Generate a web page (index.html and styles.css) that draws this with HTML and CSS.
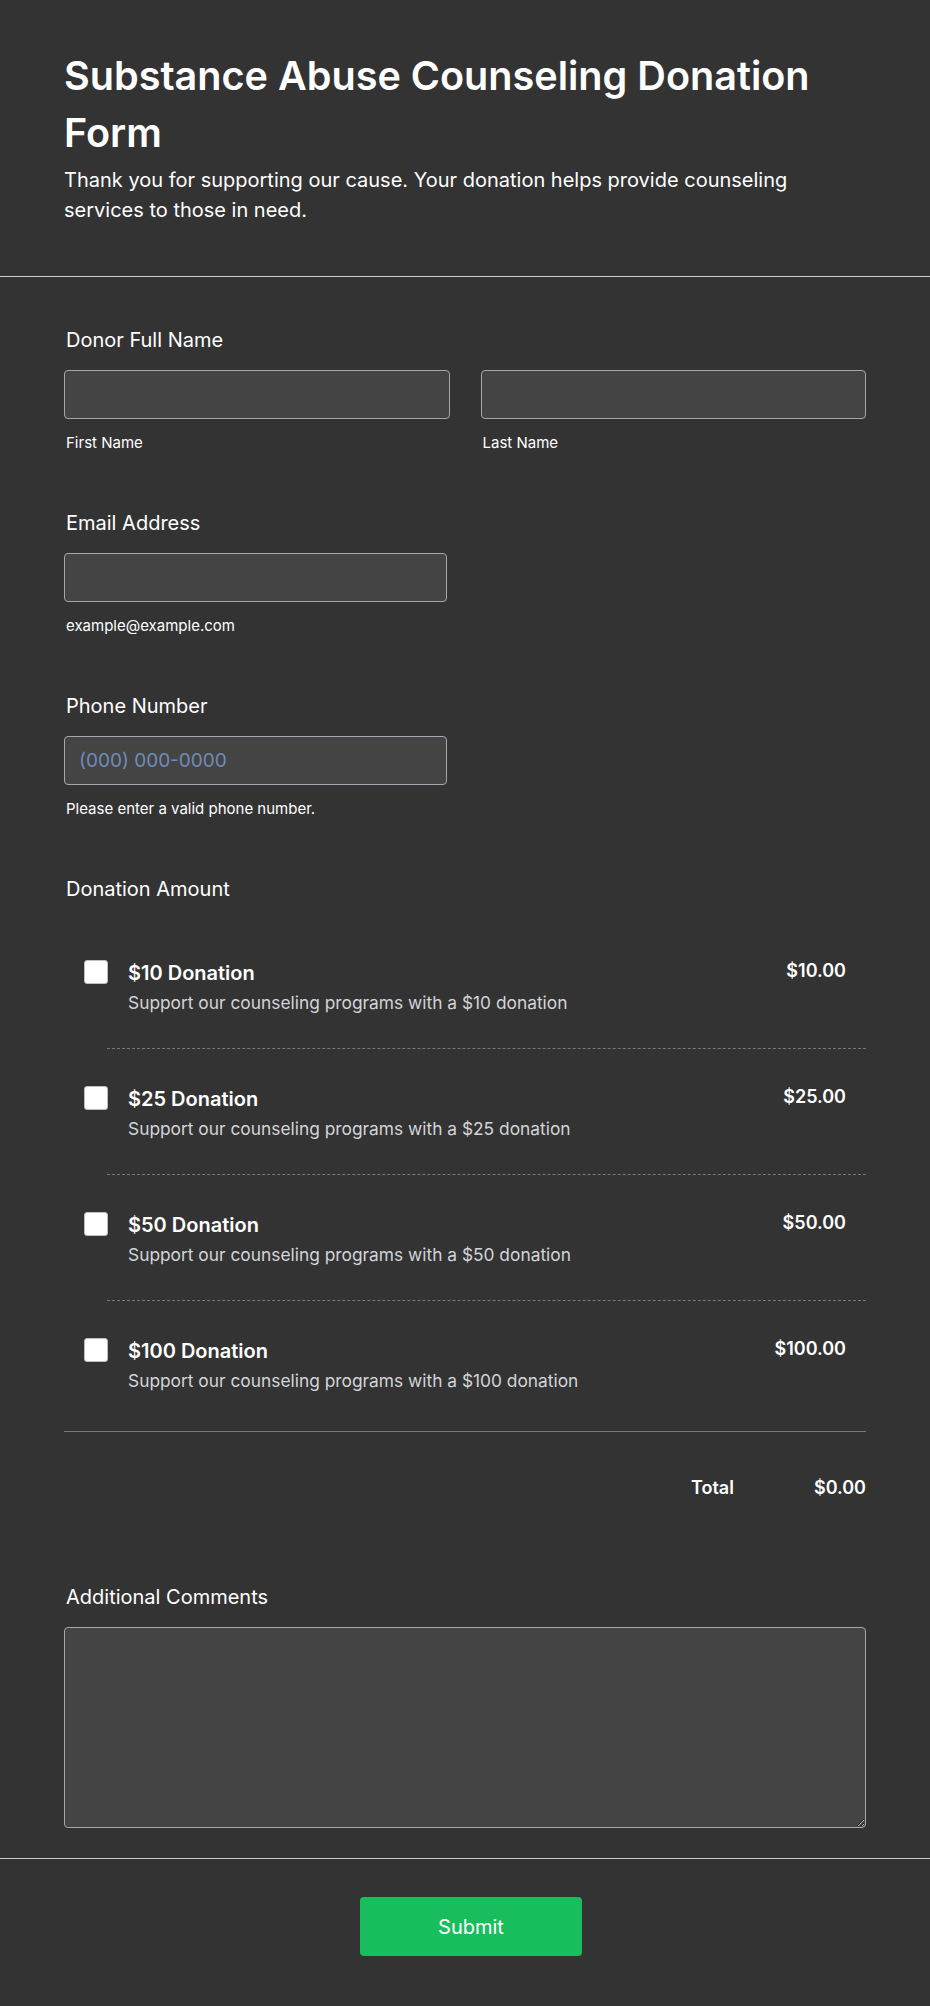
FILE: index.html
```html
<!DOCTYPE html>
<html lang="en">
<head>
<meta charset="utf-8">
<title>Substance Abuse Counseling Donation Form</title>
<link rel="stylesheet" href="styles.css">
</head>
<body>
<header class="header">
  <h1 class="title">Substance Abuse Counseling Donation Form</h1>
  <p class="subtitle">Thank you for supporting our cause. Your donation helps provide counseling services to those in need.</p>
</header>
<form class="form">
  <div class="field">
    <label class="label">Donor Full Name</label>
    <div class="name-grid">
      <div class="col">
        <input class="input" type="text">
        <span class="hint">First Name</span>
      </div>
      <div class="col">
        <input class="input" type="text">
        <span class="hint">Last Name</span>
      </div>
    </div>
  </div>
  <div class="field">
    <label class="label">Email Address</label>
    <input class="input input-half" type="email">
    <span class="hint">example@example.com</span>
  </div>
  <div class="field">
    <label class="label">Phone Number</label>
    <input class="input input-half" type="tel" placeholder="(000) 000-0000">
    <span class="hint">Please enter a valid phone number.</span>
  </div>
  <div class="field field-donation">
    <label class="label">Donation Amount</label>
    <div class="items">
      <div class="item">
        <input class="check" type="checkbox">
        <div class="item-text">
          <div class="item-title">$10 Donation</div>
          <div class="item-desc">Support our counseling programs with a $10 donation</div>
        </div>
        <div class="item-price">$10.00</div>
      </div>
      <div class="sep"></div>
      <div class="item">
        <input class="check" type="checkbox">
        <div class="item-text">
          <div class="item-title">$25 Donation</div>
          <div class="item-desc">Support our counseling programs with a $25 donation</div>
        </div>
        <div class="item-price">$25.00</div>
      </div>
      <div class="sep"></div>
      <div class="item">
        <input class="check" type="checkbox">
        <div class="item-text">
          <div class="item-title">$50 Donation</div>
          <div class="item-desc">Support our counseling programs with a $50 donation</div>
        </div>
        <div class="item-price">$50.00</div>
      </div>
      <div class="sep"></div>
      <div class="item item-last">
        <input class="check" type="checkbox">
        <div class="item-text">
          <div class="item-title">$100 Donation</div>
          <div class="item-desc">Support our counseling programs with a $100 donation</div>
        </div>
        <div class="item-price">$100.00</div>
      </div>
    </div>
    <div class="total">
      <span class="total-label">Total</span>
      <span class="total-value">$0.00</span>
    </div>
  </div>
  <div class="field field-comments">
    <label class="label">Additional Comments</label>
    <textarea class="textarea"></textarea>
  </div>
</form>
<footer class="footer">
  <button class="submit" type="button">Submit</button>
</footer>
</body>
</html>
```

FILE: styles.css
```css
* { box-sizing: border-box; }
html, body { margin: 0; padding: 0; }
body {
  background: #333333;
  color: #ffffff;
  font-family: Inter, "Noto Sans", sans-serif;
}
.header {
  padding: 48px 64px 51px;
  border-bottom: 1px solid #cfcfcf;
}
.title {
  margin: 0;
  font-size: 39.6px;
  line-height: 57px;
  font-weight: 600;
}
.subtitle {
  margin: 3px 0 0;
  font-size: 20px;
  line-height: 30px;
  font-weight: 400;
}
.form {
  padding: 50px 64px 0;
}
.field {
  display: flex;
  flex-direction: column;
  margin-bottom: 57px;
}
.label {
  display: block;
  font-size: 20px;
  line-height: 26px;
  font-weight: 400;
  margin: 0 2px 17px;
}
.name-grid {
  display: grid;
  grid-template-columns: 1fr 1fr;
  gap: 31px;
}
.col { display: flex; flex-direction: column; }
.input {
  display: block;
  width: 100%;
  height: 49px;
  background: #444444;
  border: 1px solid #a3a7ae;
  border-radius: 4px;
  padding: 0 14px;
  color: #ffffff;
  font-family: inherit;
  font-size: 19px;
}
.input::placeholder { color: #6f8db8; }
.input-half { width: 383px; }
.hint {
  display: block;
  margin: 13px 2px 0;
  font-size: 15px;
  line-height: 21px;
}
.items {
  margin-top: 4px;
  border-bottom: 1px solid #7a7a7a;
  padding-bottom: 5px;
}
.item {
  display: flex;
  align-items: flex-start;
  padding: 36px 20px 32px;
}
.check {
  appearance: none;
  -webkit-appearance: none;
  margin: 1px 20px 0 0;
  width: 24px;
  height: 24px;
  flex: 0 0 24px;
  background: #ffffff;
  border: 1px solid #bdbdbd;
  border-radius: 3px;
}
.item-text { flex: 1; }
.item-title {
  font-size: 20px;
  line-height: 28px;
  font-weight: 600;
}
.item-desc {
  margin-top: 2px;
  font-size: 17.35px;
  line-height: 27px;
  color: #d2d4d8;
}
.item-price {
  font-size: 18px;
  line-height: 27px;
  font-weight: 600;
  margin-top: -2px;
}
.sep {
  margin-left: 43px;
  border-top: 1px dashed #777777;
}
.total {
  display: flex;
  justify-content: flex-end;
  gap: 80px;
  margin-top: 42px;
  font-size: 18px;
  line-height: 27px;
  font-weight: 600;
}
.field-donation { margin-bottom: 83px; }
.field-comments { margin-bottom: 30px; }
.textarea {
  display: block;
  width: 100%;
  height: 201px;
  background: #444444;
  border: 1px solid #a3a7ae;
  border-radius: 4px;
  color: #ffffff;
  font-family: inherit;
  font-size: 18px;
  padding: 10px 14px;
}
.footer {
  border-top: 1px solid #c8c8c8;
  padding: 38px 0 50px;
  display: flex;
  justify-content: center;
}
.submit {
  margin-left: 12px;
  width: 222px;
  height: 59px;
  background: #18be5e;
  color: #ffffff;
  border: none;
  border-radius: 4px;
  font-family: inherit;
  font-size: 20px;
  font-weight: 400;
}
```
